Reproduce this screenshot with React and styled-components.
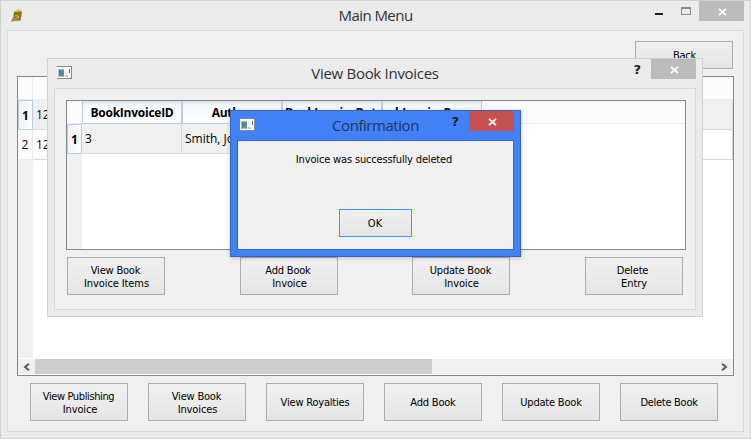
import React from 'react';
import styled, { createGlobalStyle, css } from 'styled-components';

const GlobalStyle = createGlobalStyle`
  * { box-sizing: border-box; }
  body { margin: 0; overflow: hidden; }
`;

const uiFont = '"DejaVu Sans Condensed", "Liberation Sans", sans-serif';
const titleFont = '"Open Sans", "Noto Sans", sans-serif';

const Desktop = styled.div`
  position: relative;
  width: 751px;
  height: 439px;
  overflow: hidden;
  background: #fff;
`;

const Window = styled.section`
  display: flex;
  flex-direction: column;
  width: ${(p) => p.$w}px;
  height: ${(p) => p.$h}px;
  padding: 0 6px 6px;
  border: 1px solid ${(p) => (p.$active ? '#3565b8' : '#d1d1d1')};
  background: ${(p) => (p.$active ? '#4282f9' : '#ebebeb')};
`;

const Dialog = styled(Window)`
  position: absolute;
  left: ${(p) => p.$x}px;
  top: ${(p) => p.$y}px;
  ${(p) => p.$active && css`box-shadow: 0 1px 4px rgba(0, 0, 0, 0.22);`}
`;

const TitleBar = styled.header`
  display: grid;
  grid-template-columns: 90px 1fr 90px;
  flex: none;
  height: 29px;
`;

const TitleIcon = styled.span`
  display: flex;
  padding: 7px 0 0 3px;
`;

const Title = styled.h1`
  margin: 0;
  font: 400 15px/29px ${titleFont};
  letter-spacing: ${(p) => p.$track}px;
  text-align: center;
  white-space: nowrap;
  color: ${(p) => (p.$active ? '#23355c' : '#333')};
`;

const Controls = styled.div`
  display: flex;
  justify-content: flex-end;
  align-items: flex-start;
`;

const CloseBox = styled.button`
  display: flex;
  align-items: center;
  justify-content: center;
  flex: none;
  width: 45px;
  height: 20px;
  padding: 1px 0 0 1px;
  border: 0;
  background: ${(p) => (p.$active ? '#c75050' : '#bcbcbc')};
`;

const Glyph = styled.span`
  display: flex;
  padding-top: ${(p) => p.$top}px;
  margin-right: ${(p) => p.$gap}px;
`;

const HelpMark = styled.span`
  margin: 3px ${(p) => p.$gap}px 0 0;
  font: 700 13px/15px "DejaVu Sans", sans-serif;
  color: #1e1e1e;
`;

const Client = styled.div`
  display: flex;
  flex-direction: column;
  flex: 1;
  min-height: 0;
  padding: ${(p) => p.$pad};
  border: 1px solid ${(p) => (p.$active ? '#3565b8' : '#dadada')};
  background: #f0f0f0;
`;

const Button = styled.button`
  display: flex;
  flex-direction: column;
  align-items: center;
  justify-content: center;
  flex: none;
  width: ${(p) => p.$w || 98}px;
  height: ${(p) => p.$h || 38}px;
  padding: 1px 0 0;
  border: 1px solid ${(p) => (p.$focus ? '#3399ff' : '#acacac')};
  background: linear-gradient(#f0f0f0, #e5e5e5);
  font: 11px/13px ${uiFont};
  color: #000;
`;

const Line = styled.span`
  letter-spacing: ${(p) => p.$track}px;
  padding-left: ${(p) => (p.$shift > 0 ? p.$shift : 0)}px;
  padding-right: ${(p) => (p.$shift < 0 ? -p.$shift : 0)}px;
  white-space: nowrap;
`;

const TopActions = styled.div`
  display: flex;
  justify-content: flex-end;
  margin: 0 1px 7px 0;
`;

const MainActions = styled.div`
  display: flex;
  gap: 20px;
  margin: 7px 0 0 13px;
`;

const DialogActions = styled.div`
  display: grid;
  grid-template-columns: 173px 172px 173px 98px;
  margin: 7px 0 0 1px;
`;

const TableFrame = styled.div`
  display: flex;
  flex-direction: column;
  flex: none;
  height: ${(p) => p.$h}px;
  border: 1px solid #828790;
  background: #fff;
  overflow: hidden;
  font: 12px/15px ${titleFont};
  color: #000;
`;

const HeaderRow = styled.div`
  display: flex;
  flex: none;
  height: 23px;
  border-bottom: 1px solid #e6eff8;
  background: #fcfcfc;
`;

const Corner = styled.div`
  flex: none;
  width: 15px;
  border-right: ${(p) => (p.$line ? '1px solid #e6eff8' : '0')};
`;

const ColumnHead = styled.div`
  display: flex;
  align-items: center;
  justify-content: center;
  flex: none;
  width: 100px;
  height: 23px;
  border: solid #bccbde;
  border-width: 0 1px 1px;
  background: linear-gradient(#d4dfeb, #f4f8fc 4px, #fcfdfe);
  overflow: hidden;
  font-weight: 700;
  letter-spacing: -0.25px;
  white-space: nowrap;
  padding-left: ${(p) => p.$inset || 0}px;
`;

const Row = styled.div`
  display: flex;
  flex: none;
  height: 30px;
`;

const RowHead = styled.div`
  display: flex;
  align-items: center;
  justify-content: center;
  flex: none;
  width: 15px;
  ${(p) =>
    p.$current
      ? css`
          border: 1px solid #bccbde;
          background: linear-gradient(90deg, #eef4fa, #fcfdfe);
          font-weight: 700;
        `
      : css`
          border: solid #e6eff8;
          border-width: 0 1px 1px 0;
          background: #fcfcfc;
        `}
`;

const Cell = styled.div`
  display: flex;
  align-items: center;
  flex: none;
  width: ${(p) => p.$w}px;
  padding: 0 0 1px 3px;
  border: solid #d8d8d8;
  border-width: 0 1px 1px 0;
  background: ${(p) => (p.$alt ? '#f0f0f0' : '#fff')};
  white-space: nowrap;
`;

const Gutter = styled.div`
  flex: 1;
  width: 15px;
  background: #f0f0f0;
`;

const ScrollBar = styled.div`
  display: flex;
  align-items: center;
  flex: none;
  height: 17px;
  border: solid #fff;
  border-width: 1px 0;
  background: #f0f0f0;
`;

const ScrollArrow = styled.span`
  display: flex;
  justify-content: center;
  width: 17px;
`;

const ScrollTrack = styled.div`
  flex: 1;
  height: 15px;
`;

const ScrollThumb = styled.div`
  width: 397px;
  height: 15px;
  background: #cdcdcd;
`;

const Message = styled.p`
  margin: 0 0 43px;
  padding-right: 3px;
  font: 11px/13px ${uiFont};
  text-align: center;
  white-space: nowrap;
  color: #000;
`;

const Centered = styled.div`
  display: flex;
  justify-content: center;
`;

const CloseGlyph = () => (
  <svg width="9" height="8" viewBox="0 0 9 8">
    <path d="M1 .8L8 7.2M8 .8L1 7.2" stroke="#fff" strokeWidth="1.8" />
  </svg>
);

const BookIcon = () => (
  <svg width="13" height="15" viewBox="0 0 13 15">
    <path d="M4 3L9 1 12 3 11 12 1 14 3 9z" fill="#d8cfae" />
    <path d="M5 3L9 1 11 3.5 5 5z" fill="#d8cf35" />
    <path d="M4 4L12 3.5 10.5 12.5 3 12.5z" fill="#927018" />
    <path d="M1 13.5L3 9 9.5 12.5z" fill="#a88a45" />
    <path d="M5 8.5C6 6 9 8 8.5 10.5M5.5 10.5L7.5 9" fill="none" stroke="#d9c692" />
  </svg>
);

const WindowIcon = () => (
  <svg width="15" height="14" viewBox="0 0 15 14" shapeRendering="crispEdges">
    <defs>
      <linearGradient id="pane" x1="0" y1="0" x2="1" y2="1">
        <stop offset="0" stopColor="#4d74a8" />
        <stop offset="1" stopColor="#4fa873" />
      </linearGradient>
    </defs>
    <path d="M0 0H15V13H0z" fill="#858a8c" />
    <path d="M0 1H14V12H0z" fill="#fafafa" />
    <path d="M1 3H7V11H1z" fill="#a9bccb" />
    <path d="M2 4H7V10H2z" fill="url(#pane)" />
    <path d="M8 9H11V11H8z" fill="#c8cbcb" />
    <path d="M12 3H13V7H12z" fill="#3d6e83" />
  </svg>
);

const ArrowGlyph = ({ right }) => (
  <svg width="7" height="8" viewBox="0 0 7 8">
    <path d={right ? 'M1 .8L5 4 1 7.2' : 'M6 .8L2 4 6 7.2'} fill="none" stroke="#5c5c5c" strokeWidth="2" />
  </svg>
);

const ActionButton = ({ lines, ...rest }) => (
  <Button {...rest}>
    {lines.map(([text, track, shift]) => (
      <Line key={text} $track={track} $shift={shift || 0}>{text}</Line>
    ))}
  </Button>
);

const mainActions = [
  [['View Publishing', -0.38, -1], ['Invoice', -0.1, 2]],
  [['View Book', -0.2, -1], ['Invoices', -0.1, 1]],
  [['View Royalties', -0.2]],
  [['Add Book', -0.2]],
  [['Update Book', -0.2]],
  [['Delete Book', -0.28]],
];

const invoiceActions = [
  [['View Book', -0.2, -1], ['Invoice Items', -0.1, 1]],
  [['Add Book', -0.2, -2], ['Invoice', -0.1, 1]],
  [['Update Book', -0.2, -1], ['Invoice', -0.1, 1]],
  [['Delete', -0.15, -3], ['Entry', -0.1, 0]],
];

const MainMenu = () => (
  <Window $w={751} $h={439}>
    <TitleBar>
      <TitleIcon><Glyph $top={0} $gap={0}><BookIcon /></Glyph></TitleIcon>
      <Title $track={-0.55}>Main Menu</Title>
      <Controls>
        <Glyph $top={12} $gap={18}>
          <svg width="8" height="2"><path d="M0 0H8V2H0z" fill="#1e1e1e" /></svg>
        </Glyph>
        <Glyph $top={6} $gap={8}>
          <svg width="10" height="8" shapeRendering="crispEdges">
            <path d="M0 0H10V8H0zM1 2V7H9V2z" fill="#8a8a8a" fillRule="evenodd" />
          </svg>
        </Glyph>
        <CloseBox><CloseGlyph /></CloseBox>
      </Controls>
    </TitleBar>
    <Client $pad="10px 9px 0">
      <TopActions><ActionButton $h={28} lines={[['Back', -0.25, 1]]} /></TopActions>
      <TableFrame $h={300}>
        <HeaderRow><Corner $line /></HeaderRow>
        <Row><RowHead $current>1</RowHead><Cell $w={700} $alt>12</Cell></Row>
        <Row><RowHead>2</RowHead><Cell $w={700}>12</Cell></Row>
        <Gutter />
        <ScrollBar>
          <ScrollArrow><ArrowGlyph /></ScrollArrow>
          <ScrollTrack><ScrollThumb /></ScrollTrack>
          <ScrollArrow><ArrowGlyph right /></ScrollArrow>
        </ScrollBar>
      </TableFrame>
      <MainActions>
        {mainActions.map((lines) => <ActionButton key={lines[0][0]} lines={lines} />)}
      </MainActions>
    </Client>
  </Window>
);

const InvoicesDialog = () => (
  <Dialog $x={47} $y={58} $w={656} $h={259}>
    <TitleBar>
      <TitleIcon><WindowIcon /></TitleIcon>
      <Title $track={-0.29}>View Book Invoices</Title>
      <Controls>
        <HelpMark $gap={10}>?</HelpMark>
        <CloseBox><CloseGlyph /></CloseBox>
      </Controls>
    </TitleBar>
    <Client $pad="11px 9px 0 11px">
      <TableFrame $h={150}>
        <HeaderRow>
          <Corner />
          <ColumnHead>BookInvoiceID</ColumnHead>
          <ColumnHead>Author</ColumnHead>
          <ColumnHead $inset={4}>BookInvoiceDate</ColumnHead>
          <ColumnHead $inset={4}>BookInvoicePayment</ColumnHead>
        </HeaderRow>
        <Row>
          <RowHead $current>1</RowHead>
          <Cell $w={100} $alt>3</Cell>
          <Cell $w={100} $alt>Smith, John</Cell>
          <Cell $w={100} $alt />
          <Cell $w={100} $alt />
        </Row>
        <Gutter />
      </TableFrame>
      <DialogActions>
        {invoiceActions.map((lines) => <ActionButton key={lines[0][0]} lines={lines} />)}
      </DialogActions>
    </Client>
  </Dialog>
);

const ConfirmationDialog = () => (
  <Dialog $active $x={230} $y={110} $w={291} $h={147}>
    <TitleBar>
      <TitleIcon><WindowIcon /></TitleIcon>
      <Title $active $track={-0.45}>Confirmation</Title>
      <Controls>
        <HelpMark $gap={10}>?</HelpMark>
        <CloseBox $active><CloseGlyph /></CloseBox>
      </Controls>
    </TitleBar>
    <Client $active $pad="12px 0 0">
      <Message><Line $track={-0.16}>Invoice was successfully deleted</Line></Message>
      <Centered><ActionButton $focus $w={73} $h={28} lines={[['OK', 0, -1]]} /></Centered>
    </Client>
  </Dialog>
);

export default function App() {
  return (
    <Desktop>
      <GlobalStyle />
      <MainMenu />
      <InvoicesDialog />
      <ConfirmationDialog />
    </Desktop>
  );
}
